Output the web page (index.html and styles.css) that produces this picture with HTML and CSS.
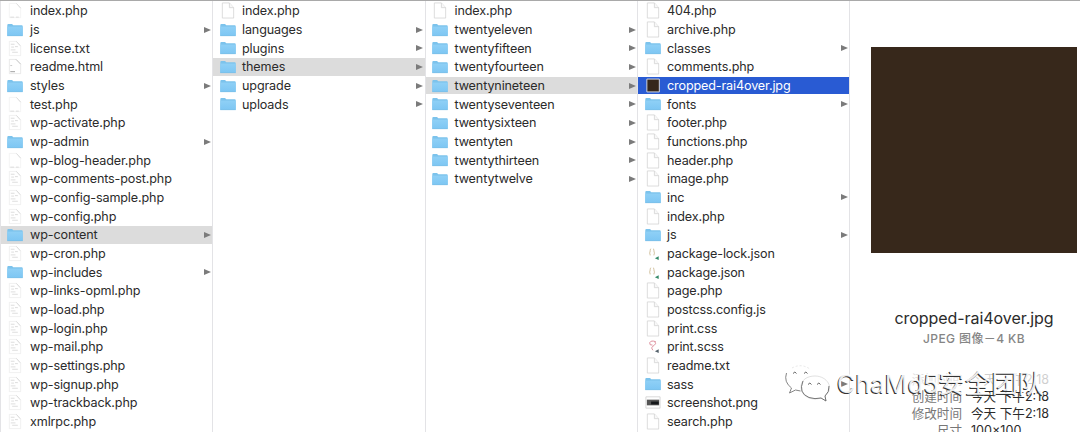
FILE: index.html
```html
<!DOCTYPE html>
<html lang="zh-CN">
<head>
<meta charset="utf-8">
<title>Finder</title>
<link rel="stylesheet" href="styles.css">
</head>
<body>
<svg class="defs" aria-hidden="true">
  <defs>
    <linearGradient id="blue" x1="0" y1="0" x2="0" y2="1"><stop offset="0" stop-color="#8fd0f6"/><stop offset="1" stop-color="#7dc6f3"/></linearGradient>
    <symbol id="folder" viewBox="0 0 16 14"><path d="M.3 2.200Q.3 1 1.300 1H5l1.300 1.200h8.400q1 0 1 1V12.800H.3z" fill="#7cc3ec"/><path d="M.3 3.600h15.400v9.200H.3z" fill="url(#blue)"/><path d="M.3 12.700h15.400" stroke="#74bbe4" stroke-width=".6"/></symbol>
    <symbol id="file" viewBox="0 0 16 18"><path d="M2 1h7.500l4.500 5v11H2z" fill="#fff" stroke="#d2d2d2" stroke-width=".8"/><path d="M9.500 1v5H14" fill="#f8f8f8" stroke="#d2d2d2" stroke-width=".8"/></symbol>
    <symbol id="plain" viewBox="0 0 16 18"><path d="M2 1.500h7.500l4.500 5v10H2z" fill="#fff" stroke="#efefef" stroke-width=".7"/><path d="M9.500 1.500l4.500 5M3 16h4M9 16h3" fill="none" stroke="#cfcfcf" stroke-width=".7"/></symbol>
    <symbol id="code" viewBox="0 0 16 18"><path d="M2 1.500h7.500l4.500 5v10H2z" fill="#fff" stroke="#e8e8e8" stroke-width=".7"/><path d="M3.500 4.500h4M4 7.500h3M8 7h3M3.500 10.500h5M5 13h6M9.500 1.500l4 4.500" fill="none" stroke="#d3d3d3" stroke-width=".8"/></symbol>
    <symbol id="html" viewBox="0 0 16 18"><path d="M2 1.500h7.500l4.500 5v10H2z" fill="#fff" stroke="#dedede" stroke-width=".7"/><path d="M9 1.500l5 5M3 8h2" fill="none" stroke="#bbb" stroke-width=".8"/><path d="M3 14.500h5" stroke="#999" stroke-width="1"/></symbol>
    <symbol id="json" viewBox="0 0 16 18"><path d="M6 4Q5 4 5 6t-.8 2.500Q5 9 5 11M8 4q1 0 1 2t.8 2.500Q9 9 9 11" fill="none" stroke="#c9b68c" stroke-width=".9"/><path d="M14 12v4l-4-2z" fill="#348a68"/></symbol>
    <symbol id="scss" viewBox="0 0 16 18"><path d="M11 4Q6 2 4.500 5q-.5 3 3 2.500M10 4Q12 6 9 8q-4 2-1 5" fill="none" stroke="#dc8a98" stroke-width="1"/><path d="M14 12v4l-4-2z" fill="#53606a"/></symbol>
    <symbol id="dark" viewBox="0 0 16 18"><path d="M1.500 2.200h13.200v13.600H1.500z" fill="#35271c" stroke="#d9dce4" stroke-width="1"/></symbol>
    <symbol id="shot" viewBox="0 0 16 18"><path d="M.5 3h15v12H.5z" fill="#fff" stroke="#ccc" stroke-width=".8"/><path d="M1.500 6h13v6h-13z" fill="#555"/><path d="M6 8h8v3H6z" fill="#15171a"/></symbol>
  </defs>
</svg>
<main class="browser">
  <ul class="column">
    <li class="row"><svg class="icon"><use href="#plain"/></svg>index.php</li>
    <li class="row folder"><svg class="icon"><use href="#folder"/></svg>js</li>
    <li class="row"><svg class="icon"><use href="#code"/></svg>license.txt</li>
    <li class="row"><svg class="icon"><use href="#html"/></svg>readme.html</li>
    <li class="row folder"><svg class="icon"><use href="#folder"/></svg>styles</li>
    <li class="row"><svg class="icon"><use href="#plain"/></svg>test.php</li>
    <li class="row"><svg class="icon"><use href="#code"/></svg>wp-activate.php</li>
    <li class="row folder"><svg class="icon"><use href="#folder"/></svg>wp-admin</li>
    <li class="row"><svg class="icon"><use href="#plain"/></svg>wp-blog-header.php</li>
    <li class="row"><svg class="icon"><use href="#code"/></svg>wp-comments-post.php</li>
    <li class="row"><svg class="icon"><use href="#code"/></svg>wp-config-sample.php</li>
    <li class="row"><svg class="icon"><use href="#code"/></svg>wp-config.php</li>
    <li class="row folder open"><svg class="icon"><use href="#folder"/></svg>wp-content</li>
    <li class="row"><svg class="icon"><use href="#code"/></svg>wp-cron.php</li>
    <li class="row folder"><svg class="icon"><use href="#folder"/></svg>wp-includes</li>
    <li class="row"><svg class="icon"><use href="#code"/></svg>wp-links-opml.php</li>
    <li class="row"><svg class="icon"><use href="#code"/></svg>wp-load.php</li>
    <li class="row"><svg class="icon"><use href="#code"/></svg>wp-login.php</li>
    <li class="row"><svg class="icon"><use href="#code"/></svg>wp-mail.php</li>
    <li class="row"><svg class="icon"><use href="#code"/></svg>wp-settings.php</li>
    <li class="row"><svg class="icon"><use href="#code"/></svg>wp-signup.php</li>
    <li class="row"><svg class="icon"><use href="#code"/></svg>wp-trackback.php</li>
    <li class="row"><svg class="icon"><use href="#code"/></svg>xmlrpc.php</li>
  </ul>
  <ul class="column">
    <li class="row"><svg class="icon"><use href="#file"/></svg>index.php</li>
    <li class="row folder"><svg class="icon"><use href="#folder"/></svg>languages</li>
    <li class="row folder"><svg class="icon"><use href="#folder"/></svg>plugins</li>
    <li class="row folder open"><svg class="icon"><use href="#folder"/></svg>themes</li>
    <li class="row folder"><svg class="icon"><use href="#folder"/></svg>upgrade</li>
    <li class="row folder"><svg class="icon"><use href="#folder"/></svg>uploads</li>
  </ul>
  <ul class="column">
    <li class="row"><svg class="icon"><use href="#file"/></svg>index.php</li>
    <li class="row folder"><svg class="icon"><use href="#folder"/></svg>twentyeleven</li>
    <li class="row folder"><svg class="icon"><use href="#folder"/></svg>twentyfifteen</li>
    <li class="row folder"><svg class="icon"><use href="#folder"/></svg>twentyfourteen</li>
    <li class="row folder open"><svg class="icon"><use href="#folder"/></svg>twentynineteen</li>
    <li class="row folder"><svg class="icon"><use href="#folder"/></svg>twentyseventeen</li>
    <li class="row folder"><svg class="icon"><use href="#folder"/></svg>twentysixteen</li>
    <li class="row folder"><svg class="icon"><use href="#folder"/></svg>twentyten</li>
    <li class="row folder"><svg class="icon"><use href="#folder"/></svg>twentythirteen</li>
    <li class="row folder"><svg class="icon"><use href="#folder"/></svg>twentytwelve</li>
  </ul>
  <ul class="column">
    <li class="row"><svg class="icon"><use href="#file"/></svg>404.php</li>
    <li class="row"><svg class="icon"><use href="#file"/></svg>archive.php</li>
    <li class="row folder"><svg class="icon"><use href="#folder"/></svg>classes</li>
    <li class="row"><svg class="icon"><use href="#file"/></svg>comments.php</li>
    <li class="row selected"><svg class="icon"><use href="#dark"/></svg>cropped-rai4over.jpg</li>
    <li class="row folder"><svg class="icon"><use href="#folder"/></svg>fonts</li>
    <li class="row"><svg class="icon"><use href="#file"/></svg>footer.php</li>
    <li class="row"><svg class="icon"><use href="#file"/></svg>functions.php</li>
    <li class="row"><svg class="icon"><use href="#file"/></svg>header.php</li>
    <li class="row"><svg class="icon"><use href="#file"/></svg>image.php</li>
    <li class="row folder"><svg class="icon"><use href="#folder"/></svg>inc</li>
    <li class="row"><svg class="icon"><use href="#file"/></svg>index.php</li>
    <li class="row folder"><svg class="icon"><use href="#folder"/></svg>js</li>
    <li class="row"><svg class="icon"><use href="#json"/></svg>package-lock.json</li>
    <li class="row"><svg class="icon"><use href="#json"/></svg>package.json</li>
    <li class="row"><svg class="icon"><use href="#file"/></svg>page.php</li>
    <li class="row"><svg class="icon"><use href="#file"/></svg>postcss.config.js</li>
    <li class="row"><svg class="icon"><use href="#file"/></svg>print.css</li>
    <li class="row"><svg class="icon"><use href="#scss"/></svg>print.scss</li>
    <li class="row"><svg class="icon"><use href="#file"/></svg>readme.txt</li>
    <li class="row folder"><svg class="icon"><use href="#folder"/></svg>sass</li>
    <li class="row"><svg class="icon"><use href="#shot"/></svg>screenshot.png</li>
    <li class="row"><svg class="icon"><use href="#file"/></svg>search.php</li>
  </ul>
  <section class="preview">
    <div class="image"></div>
    <h1 class="name">cropped-rai4over.jpg</h1>
    <p class="kind">JPEG 图像－4 KB</p>
    <dl class="info">
      <dt class="faint">添加时间</dt><dd class="faint">今天 下午2:18</dd>
      <dt>创建时间</dt><dd>今天 下午2:18</dd>
      <dt>修改时间</dt><dd>今天 下午2:18</dd>
      <dt>尺寸</dt><dd>100×100</dd>
    </dl>
  </section>
</main>
<div class="watermark">
  <svg class="wechat" viewBox="0 0 48 40">
    <path d="M17 3C7 3 1 9 1 15c0 5 3 8 6 10l-2 5 6-3q5 2 10 1C36 27 35 15 32 9 29 5 24 3 17 3z" fill="#fff" fill-opacity=".8"/>
    <path d="M2.500 10q-3 9 5 15l-2 5 6-3 5 1" fill="none" stroke="#777" stroke-width=".9"/>
    <path d="M8 5Q17 0 26 6" fill="none" stroke="#ddd" stroke-width=".7" stroke-dasharray="2 2"/>
    <path d="M31 13c-8 0-14 4-14 11s6 12 14 12q3 0 6-1l5 3-1-5c10-8 2-20-10-20z" fill="#fff" stroke="#ccc" stroke-width=".6"/>
    <path d="M19 18q-5 12 6 16.500 6 2 12 .5l5 3-1-5q4.500-4 4-10" fill="none" stroke="#666" stroke-width=".9"/>
    <path d="M9 10.500q2-3 3.500 0M20 10.500q2-3 3.500 0M24 21.500q2-3 3.500 0M33 21.500q2-3 3.500 0" fill="none" stroke="#666" stroke-width="1"/>
  </svg>
  <span class="brand">ChaMd5<span class="brand-cjk">安全团队</span></span>
</div>
</body>
</html>
```

FILE: styles.css
```css
* { box-sizing: border-box; }
body {
  margin: 0;
  width: 1080px;
  height: 432px;
  overflow: hidden;
  position: relative;
  background: #fff;
  color: #2b2b2b;
  font-family: Inter, "Noto Sans CJK SC", sans-serif;
  font-size: 12.6px;
}
.defs { position: absolute; width: 0; height: 0; }
.browser {
  display: grid;
  grid-template-columns: 213px 212.500px 212.500px 212px 1fr;
  height: 432px;
  border-top: 1px solid #a9a9a9;
}
.column {
  list-style: none;
  margin: 0;
  padding: 1.100px 0 0;
  border-right: 1px solid #e3e3e6;
  overflow: hidden;
}
.column:first-child { border-left: 1px solid #e3e3e6; }
.column:first-child .row { padding-left: 6px; }
.row {
  display: flex;
  align-items: center;
  height: 17.660px;
  margin-bottom: 1px;
  padding: 0 1.500px 0 6.500px;
  line-height: 17px;
  white-space: nowrap;
  letter-spacing: -.13px;
}
.icon { width: 16px; height: 17px; margin-right: 6.500px; flex: none; }
.column:first-child .icon { margin-right: 7px; }
.folder .icon { height: 14px; }
.folder::after {
  content: "";
  margin-left: auto;
  border-left: 7px solid #7b7b7b;
  border-top: 3.900px solid transparent;
  border-bottom: 3.900px solid transparent;
}
.open { background: #dcdcdc; }
.selected { background: #295bd3; color: #fff; }
.preview {
  display: flex;
  flex-direction: column;
  align-items: center;
  padding: 46px 3px 0 21px;
}
.image { width: 206px; height: 206px; background: #37281b; flex: none; }
.name {
  margin: 54px 0 0;
  font-size: 16px;
  line-height: 22px;
  font-weight: 400;
  letter-spacing: -.05px;
  white-space: nowrap;
}
.kind {
  margin: 2px 0 0;
  font-size: 12px;
  line-height: 16px;
  font-weight: 500;
  letter-spacing: .4px;
  color: #858585;
  white-space: nowrap;
}
.info {
  display: grid;
  grid-template-columns: 91px 1fr;
  column-gap: 9px;
  align-self: stretch;
  margin: 24px 0 0;
  font-size: 12.600px;
  line-height: 17px;
  grid-auto-rows: 17px;
  white-space: nowrap;
}
.info dt { text-align: right; color: #777; }
.info dd { margin: 0; }
.info .faint { opacity: .22; }
.watermark {
  position: absolute;
  left: 784px;
  top: 362px;
  display: flex;
  align-items: center;
  height: 42px;
}
.wechat { width: 48px; height: 40px; margin-right: 5px; }
.brand {
  font-size: 25.500px;
  line-height: 42px;
  letter-spacing: -.1px;
  color: rgba(255, 255, 255, .92);
  text-shadow: -1px 1px .4px #333;
  white-space: nowrap;
}
.brand-cjk { font-size: 26.500px; }
```
